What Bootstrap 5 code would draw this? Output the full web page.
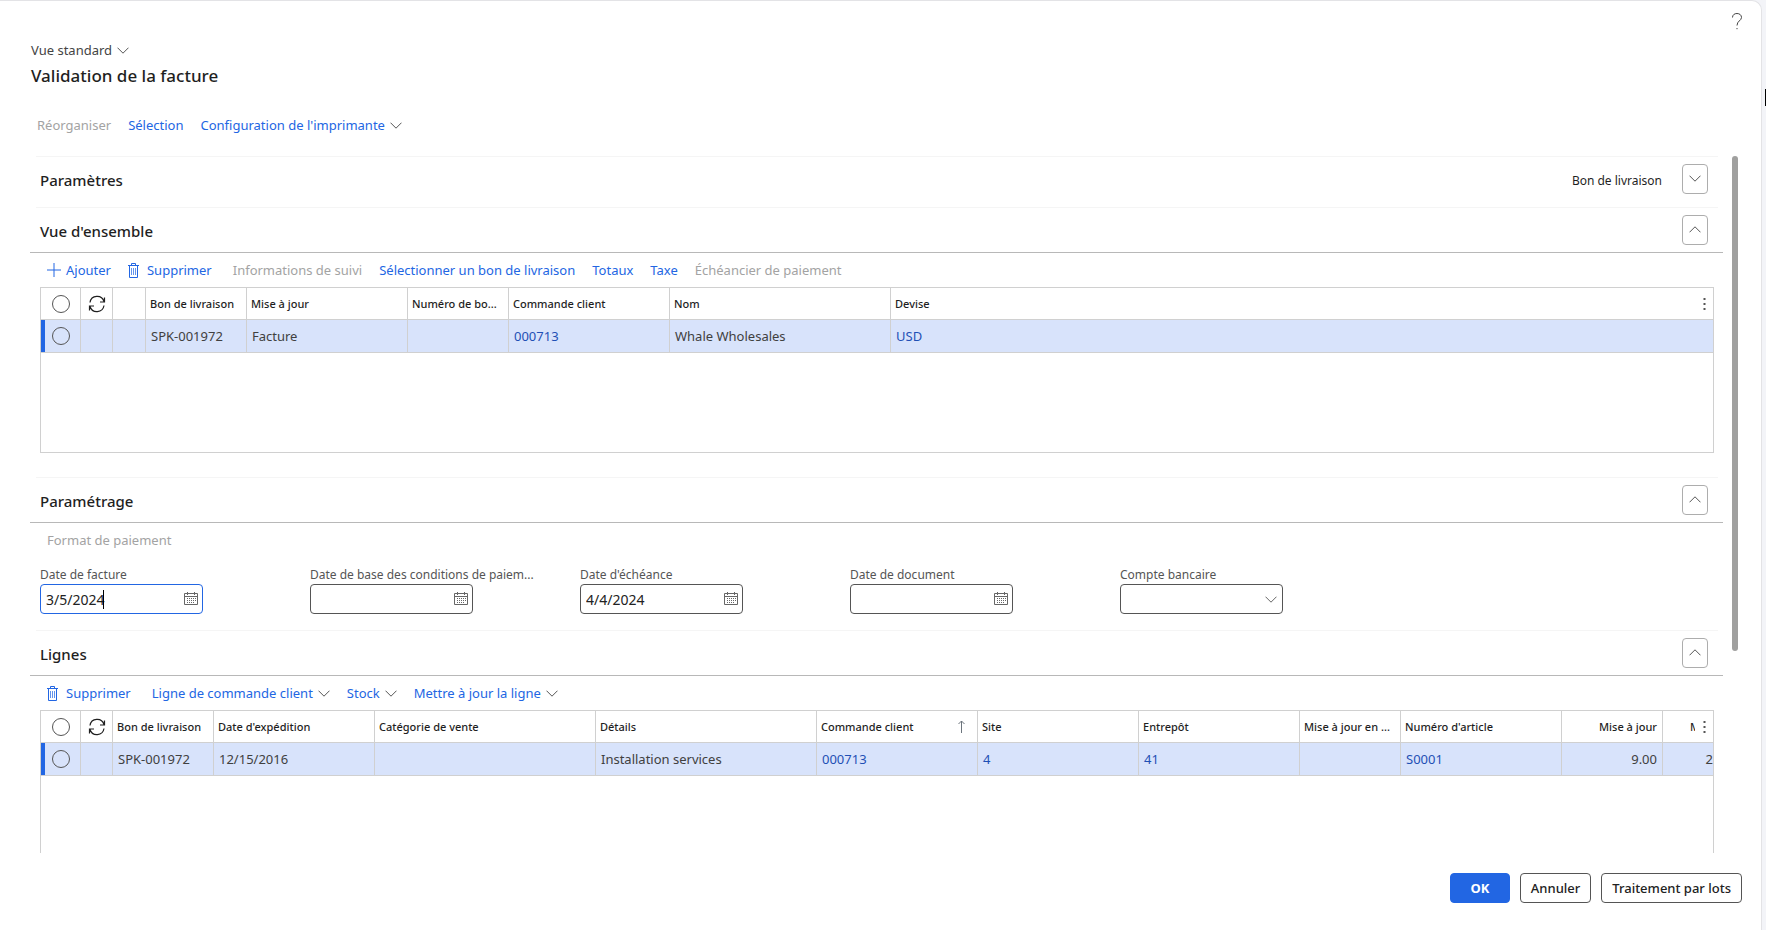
<!DOCTYPE html>
<html lang="fr">
<head>
<meta charset="utf-8">
<meta name="viewport" content="width=device-width, initial-scale=1">
<title>Validation de la facture</title>
<link rel="stylesheet" href="https://cdn.jsdelivr.net/npm/bootstrap@5.3.0/dist/css/bootstrap.min.css">
<style>
:root { --accent: #2266e3; --ink: #1f1f1f; --muted: #a3a3a3; --grid: #d0d0d0; --row: #d8e3fb; }
body { font: 13px/20px "Noto Sans", "Open Sans", sans-serif; color: var(--ink); background: #f3f4f8; }
.dialog { height: 100vh; margin-right: 4px; background: #fff; border: solid #e3e3e6; border-width: 1px 1px 0 0; border-radius: 0 10px 0 0; }
.edge-mark { position: fixed; right: 0; top: 89px; width: 1px; height: 17px; background: #000; }
button.plain { border: 0; background: none; padding: 0; color: var(--accent); white-space: nowrap; display: inline-flex; align-items: center; }
button.plain:disabled { color: var(--muted); }
button.plain.dark { color: #444; }
svg { display: block; fill: none; stroke: currentColor; flex: none; }
.chev { width: 12px; height: 7px; margin-left: 5px; color: #555; }
.ic { margin-right: 7px; }
.ic.plus { margin-right: 5px; }
.help { position: absolute; right: 18px; top: 11px; }
.dialog-head { padding: 39px 31px 0; }
.dialog-head h1 { font-size: 17px; line-height: 24px; font-weight: 500; margin: 4px 0 0; }
.main-bar { padding: 27px 37px 21px; gap: 17px; }
.pane { flex: 1 1 0; min-height: 0; padding-left: 30px; padding-right: 23px; }
.pane-body { overflow: hidden; min-width: 0; }
.track { flex: none; width: 6px; margin-left: 9px; }
.thumb { background: #a0a09f; border-radius: 3px; }
.sect-head { border-bottom: 1px solid #b8b8b8; }
.sect-head.closed { border-bottom: 0; padding-bottom: 6px; }
.sect-row { margin: 0 5px 0 6px; height: 45px; padding: 6px 10px 7px 4px; border-top: 1px solid #f5f5f5; }
.sect-row h2 { font-size: 15px; line-height: 20px; font-weight: 500; margin: 2px 0 0; }
.sect-gap { margin-top: 24px; }
.toggle { width: 26px; height: 30px; border: 1px solid #adadad; border-radius: 4px; background: #fff; display: grid; place-items: center; padding: 0; color: #555; }
.toggle .chev { margin: 0; }
.hint { font-size: 12px; padding-top: 4px; }
.act-bar { height: 34px; padding: 0 17px; gap: 17px; }
.wrap { margin: 0 9px 0 10px; border: 1px solid var(--grid); position: relative; overflow: hidden; min-height: 166px; }
.lst { width: 100%; table-layout: fixed; border-collapse: separate; border-spacing: 0; }
.lst th, .lst td { height: 33px; border-right: 1px solid var(--grid); border-bottom: 1px solid var(--grid); padding: 0 0 0 5px; white-space: nowrap; overflow: hidden; vertical-align: middle; }
.lst th { font-size: 11px; font-weight: 500; height: 32px; padding: 0 4px; }
.lst td { background: var(--row); color: #404040; }
.lst td a { color: #1f50b5; text-decoration: none; }
.lst .num { text-align: right; padding-right: 5px; }
.lst tr > :last-child { border-right: 0; }
.lst td:first-child { box-shadow: inset 4px 0 0 var(--accent); }
.lst th:first-child, .lst td:first-child { padding: 0 0 0 11px; }
.lst tr > :nth-child(2) { padding: 0; }
.lst tr > :nth-child(2) svg { margin: auto; }
.pick { appearance: none; display: block; width: 18px; height: 18px; border: 1px solid #555; border-radius: 50%; background: transparent; margin: 0; }
.w-a { width: 40px; } .w-b { width: 32px; } .w-c { width: 33px; } .w-s { width: 101px; } .w-m { width: 161px; } .w-l { width: 221px; }
.more { position: absolute; top: 0; right: 0; width: 18px; height: 31px; border: 0; padding: 0; background: #fff; display: grid; place-items: center; color: #555; }
.lst .cut { padding-right: 13px; }
.lst td.cut { padding-right: 0; }
.fields { display: grid; grid-template-columns: repeat(5, 270px); padding: 9px 10px 16px; }
.fld label { display: block; font-size: 12px; line-height: 18px; color: #555; white-space: nowrap; }
.box { position: relative; width: 163px; height: 30px; }
.box input, .box select { width: 100%; height: 100%; border: 1px solid #555; border-radius: 4px; padding: 0 5px; appearance: none; background: #fff; color: #222; font-size: 14px; outline: 0; }
.box.on input { border-color: var(--accent); }
.box svg { position: absolute; right: 5px; top: 8px; color: #666; }
.box .chev { right: 6px; top: 12px; }
.caret { position: absolute; left: 63px; top: 6px; width: 1px; height: 19px; background: #000; }
.foot { padding: 20px 19px 27px; gap: 10px; }
.foot .btn { height: 30px; border-radius: 4px; font-size: 13px; line-height: 20px; font-weight: 500; padding: 0 10px; border: 1px solid #555; color: #222; background: #fff; white-space: nowrap; }
.foot .btn.main { width: 60px; background: var(--accent); border-color: var(--accent); color: #fff; font-weight: 700; }
</style>
</head>
<body>
<svg width="0" height="0" class="position-absolute" aria-hidden="true">
  <symbol id="down" viewBox="0 0 12 7"><path d="M.5.7 6 6.2 11.5.7"/></symbol>
  <symbol id="up" viewBox="0 0 12 7"><path d="M.5 6.3 6 .8l5.5 5.5"/></symbol>
  <symbol id="bin" viewBox="0 0 12 15"><path d="M0 2.500h11M3.500 2.500v-2h4v2M1.500 2.500v12h8v-12"/><path d="M3.500 5v7M5.500 5v7M7.500 5v7" stroke-opacity=".7"/></symbol>
  <symbol id="sync" viewBox="0 0 18 18"><path d="M2 7.500A7.200 7.200 0 0 1 16 6.500M16.500 2.500v4.500h-4.500M16 10.500A7.200 7.200 0 0 1 2 11.500M1.500 15.500V11H6" stroke-width="1.200"/></symbol>
  <symbol id="cal" viewBox="0 0 14 13"><path d="M.5 1.500h13v11H.5zM1 4.500h12M3.500 0v3M10.500 0v3"/><path d="M3 6.500h9M3 8.500h9M3 10.500h7" stroke-dasharray="1 1"/></symbol>
</svg>
<div class="edge-mark"></div>
<div class="dialog d-flex flex-column position-relative">
  <button class="plain dark help" aria-label="Aide"><svg width="12" height="18" viewBox="0 0 12 18"><path d="M1.500 5.500C1.500 2.800 3.500 1.500 6 1.500s4.500 1.500 4.500 4C10.500 8.500 6 9 6 13.500M6 16v1.200"/></svg></button>
  <header class="dialog-head">
    <button class="plain dark">Vue standard<svg class="chev"><use href="#down"/></svg></button>
    <h1>Validation de la facture</h1>
  </header>
  <nav class="main-bar d-flex">
    <button class="plain" disabled>Réorganiser</button>
    <button class="plain">Sélection</button>
    <button class="plain">Configuration de l'imprimante<svg class="chev"><use href="#down"/></svg></button>
  </nav>
  <main class="pane d-flex">
    <div class="pane-body flex-grow-1">
      <section>
        <div class="sect-head closed"><div class="sect-row d-flex justify-content-between align-items-center">
          <h2>Paramètres</h2>
          <div class="d-flex align-items-center gap-3"><span class="hint me-1">Bon de livraison</span><button class="toggle" aria-label="Développer"><svg class="chev"><use href="#down"/></svg></button></div>
        </div></div>
      </section>
      <section>
        <div class="sect-head"><div class="sect-row d-flex justify-content-between align-items-center">
          <h2>Vue d'ensemble</h2>
          <button class="toggle" aria-label="Réduire"><svg class="chev"><use href="#up"/></svg></button>
        </div></div>
        <div class="act-bar d-flex align-items-center">
          <button class="plain"><svg class="ic plus" width="14" height="14" viewBox="0 0 14 14"><path d="M0 7h14M7 0v14"/></svg>Ajouter</button>
          <button class="plain me-1"><svg class="ic" width="12" height="15"><use href="#bin"/></svg>Supprimer</button>
          <button class="plain" disabled>Informations de suivi</button>
          <button class="plain">Sélectionner un bon de livraison</button>
          <button class="plain">Totaux</button>
          <button class="plain">Taxe</button>
          <button class="plain" disabled>Échéancier de paiement</button>
        </div>
        <div class="wrap">
          <table class="lst">
            <colgroup><col class="w-a"><col class="w-b"><col class="w-c"><col class="w-s"><col class="w-m"><col class="w-s"><col class="w-m"><col class="w-l"><col></colgroup>
            <thead><tr><th><input type="checkbox" class="pick" aria-label="Tout sélectionner"></th><th><svg width="18" height="18"><use href="#sync"/></svg></th><th></th><th>Bon de livraison</th><th>Mise à jour</th><th>Numéro de bo...</th><th>Commande client</th><th>Nom</th><th>Devise</th></tr></thead>
            <tbody><tr><td><input type="checkbox" class="pick" aria-label="Sélectionner SPK-001972"></td><td></td><td></td><td>SPK-001972</td><td>Facture</td><td></td><td><a href="#">000713</a></td><td>Whale Wholesales</td><td><a href="#">USD</a></td></tr></tbody>
          </table>
          <button class="more" aria-label="Options"><svg width="3" height="12" viewBox="0 0 3 12"><path d="M1.500 0v12" stroke-width="2" stroke-dasharray="2 3"/></svg></button>
        </div>
      </section>
      <section class="sect-gap">
        <div class="sect-head"><div class="sect-row d-flex justify-content-between align-items-center">
          <h2>Paramétrage</h2>
          <button class="toggle" aria-label="Réduire"><svg class="chev"><use href="#up"/></svg></button>
        </div></div>
        <div class="act-bar d-flex align-items-center"><button class="plain" disabled>Format de paiement</button></div>
        <form class="fields">
          <div class="fld"><label for="f1">Date de facture</label><div class="box on"><input id="f1" value="3/5/2024"><span class="caret"></span><svg width="14" height="13"><use href="#cal"/></svg></div></div>
          <div class="fld"><label for="f2">Date de base des conditions de paiem...</label><div class="box"><input id="f2"><svg width="14" height="13"><use href="#cal"/></svg></div></div>
          <div class="fld"><label for="f3">Date d'échéance</label><div class="box"><input id="f3" value="4/4/2024"><svg width="14" height="13"><use href="#cal"/></svg></div></div>
          <div class="fld"><label for="f4">Date de document</label><div class="box"><input id="f4"><svg width="14" height="13"><use href="#cal"/></svg></div></div>
          <div class="fld"><label for="f5">Compte bancaire</label><div class="box"><select id="f5"><option></option></select><svg class="chev"><use href="#down"/></svg></div></div>
        </form>
      </section>
      <section>
        <div class="sect-head"><div class="sect-row d-flex justify-content-between align-items-center">
          <h2>Lignes</h2>
          <button class="toggle" aria-label="Réduire"><svg class="chev"><use href="#up"/></svg></button>
        </div></div>
        <div class="act-bar d-flex align-items-center">
          <button class="plain me-1"><svg class="ic" width="12" height="15"><use href="#bin"/></svg>Supprimer</button>
          <button class="plain">Ligne de commande client<svg class="chev"><use href="#down"/></svg></button>
          <button class="plain">Stock<svg class="chev"><use href="#down"/></svg></button>
          <button class="plain">Mettre à jour la ligne<svg class="chev"><use href="#down"/></svg></button>
        </div>
        <div class="wrap">
          <table class="lst">
            <colgroup><col class="w-a"><col class="w-b"><col class="w-s"><col class="w-m"><col class="w-l"><col class="w-l"><col class="w-m"><col class="w-m"><col class="w-m"><col class="w-s"><col class="w-m"><col class="w-s"><col></colgroup>
            <thead><tr><th><input type="checkbox" class="pick" aria-label="Tout sélectionner"></th><th><svg width="18" height="18"><use href="#sync"/></svg></th><th>Bon de livraison</th><th>Date d'expédition</th><th>Catégorie de vente</th><th>Détails</th><th><div class="d-flex justify-content-between align-items-center">Commande client<svg class="me-2 text-secondary" width="7" height="13" viewBox="0 0 7 13"><path d="M3.500 13V1M.5 4l3-3 3 3"/></svg></div></th><th>Site</th><th>Entrepôt</th><th>Mise à jour en ...</th><th>Numéro d'article</th><th class="num">Mise à jour</th><th class="num cut">M</th></tr></thead>
            <tbody><tr><td><input type="checkbox" class="pick" aria-label="Sélectionner SPK-001972"></td><td></td><td>SPK-001972</td><td>12/15/2016</td><td></td><td>Installation services</td><td><a href="#">000713</a></td><td><a href="#">4</a></td><td><a href="#">41</a></td><td></td><td><a href="#">S0001</a></td><td class="num">9.00</td><td class="num cut">2</td></tr></tbody>
          </table>
          <button class="more" aria-label="Options"><svg width="3" height="12" viewBox="0 0 3 12"><path d="M1.500 0v12" stroke-width="2" stroke-dasharray="2 3"/></svg></button>
        </div>
      </section>
    </div>
    <div class="track"><div class="thumb" style="height:71%"></div></div>
  </main>
  <footer class="foot d-flex justify-content-end">
    <button class="btn main">OK</button>
    <button class="btn">Annuler</button>
    <button class="btn">Traitement par lots</button>
  </footer>
</div>
<script src="https://cdn.jsdelivr.net/npm/bootstrap@5.3.0/dist/js/bootstrap.bundle.min.js"></script>
</body>
</html>
